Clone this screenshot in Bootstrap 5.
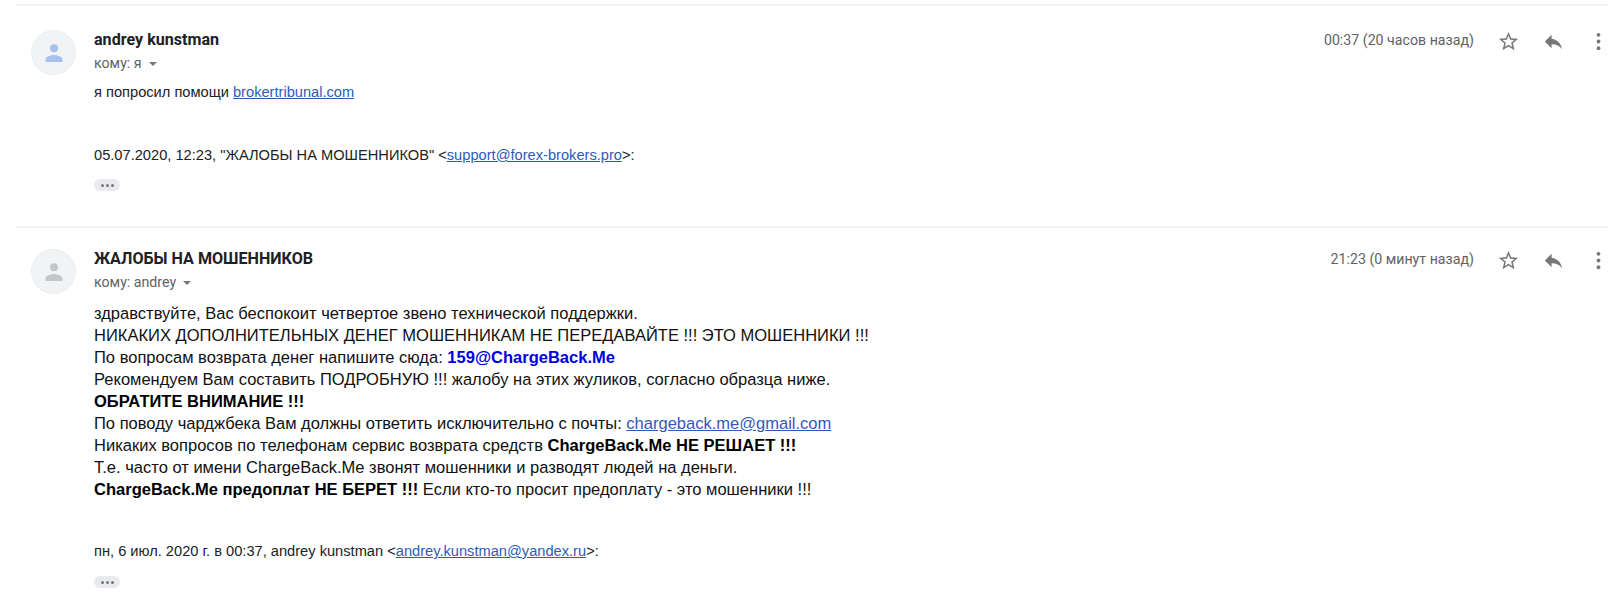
<!DOCTYPE html>
<html lang="ru">
<head>
    <meta charset="UTF-8">
    <meta name="viewport" content="width=device-width, initial-scale=1.0">
    <title>Письмо</title>
    <link href="https://cdn.jsdelivr.net/npm/bootstrap@5.3.0/dist/css/bootstrap.min.css" rel="stylesheet">
    <style>
        body {
            font-family: "Liberation Sans", Arial, sans-serif;
            background-color: #fff;
            color: #222;
            padding: 4px 15px 0;
            overflow: hidden;
        }
        a { color: #2f5bb7; }
        .mail-item {
            border-top: 2px solid #f4f4f4;
            padding: 21px 0 0 16px;
            gap: 18px;
        }
        .mail-first { height: 222px; padding-top: 24px; }
        .mail-avatar {
            width: 45px;
            height: 45px;
            border-radius: 50%;
            background-color: #f1f3f4;
            border: 1px solid #eceeef;
            flex-shrink: 0;
        }
        .mail-from {
            font-family: Roboto, sans-serif;
            font-weight: 700;
            font-size: 16.1px;
            line-height: 20px;
            color: #202124;
        }
        .mail-to {
            font-family: Roboto, sans-serif;
            font-size: 14.2px;
            line-height: 20px;
            color: #5f6368;
            margin-top: 3px;
        }
        .mail-caret {
            display: inline-block;
            border-left: 4.5px solid transparent;
            border-right: 4.5px solid transparent;
            border-top: 4.5px solid #777;
            margin-left: 7px;
            vertical-align: 2px;
        }
        .mail-time {
            font-family: Roboto, sans-serif;
            font-size: 14.2px;
            color: #5f6368;
            margin-right: 23px;
        }
        .mail-icons { gap: 22px; margin-right: -2px; }
        .mail-right { height: 22px; }
        .mail-text-sm {
            font-size: 14.65px;
            line-height: 18px;
            color: #222;
        }
        .mail-text-lg {
            font-size: 16.52px;
            line-height: 22px;
            color: #111;
            margin-top: 11px;
        }
        .mail-text-lg b { color: #000; }
        .mail-blue { color: #0000e0 !important; }
        .mail-dots {
            width: 26px;
            height: 12px;
            border-radius: 6px;
            background-color: #e8eaed;
            gap: 2px;
            margin-top: 15px;
        }
        .mail-dots i {
            width: 3px;
            height: 3px;
            border-radius: 50%;
            background-color: #777;
        }
        .mail-lead { margin-top: 10px; }
        .mail-quote1 { margin-top: 45px; }
        .mail-quote2 { margin-top: 41px; }
        .mail-quote2 + .mail-dots { margin-top: 16px; }
    </style>
</head>
<body>

<!-- first message -->
<div class="mail-item mail-first d-flex">
    <div class="mail-avatar d-flex align-items-center justify-content-center">
        <svg width="24" height="24" viewBox="0 0 24 24" fill="#a8c2f0"><circle cx="12" cy="7.200" r="4"/><path d="M3.500 21v-2.500c0-3 5.500-4.500 8.500-4.500s8.500 1.500 8.500 4.500V21z"/></svg>
    </div>
    <div class="flex-grow-1">
        <div class="d-flex justify-content-between">
            <div>
                <div class="mail-from">andrey kunstman</div>
                <div class="mail-to">кому: я<span class="mail-caret"></span></div>
            </div>
            <div class="mail-right d-flex align-items-center">
                <span class="mail-time">00:37 (20 часов назад)</span>
                <div class="mail-icons d-flex">
                    <svg width="23" height="23" viewBox="0 0 24 24" fill="#777"><path d="M22 9.200l-7.200-.6L12 2 9.200 8.600 2 9.200l5.500 4.700L5.800 21 12 17.300 18.200 21l-1.600-7.100zM12 15.400l-3.800 2.300 1-4.300-3.300-2.900 4.400-.4L12 6.100l1.700 4 4.400.4-3.300 2.900 1 4.300z"/></svg>
                    <svg width="23" height="23" viewBox="0 0 24 24" fill="#777"><path d="M10 9V5l-7 7 7 7v-4.100c5 0 8.500 1.600 11 5.100-1-5-4-10-11-11z"/></svg>
                    <svg width="23" height="23" viewBox="0 0 24 24" fill="#777"><circle cx="12" cy="5" r="2"/><circle cx="12" cy="12" r="2"/><circle cx="12" cy="19" r="2"/></svg>
                </div>
            </div>
        </div>
        <div class="mail-text-sm mail-lead">я попросил помощи <a href="#">brokertribunal.com</a></div>
        <div class="mail-text-sm mail-quote1">05.07.2020, 12:23, "ЖАЛОБЫ НА МОШЕННИКОВ" &lt;<a href="#">support@forex-brokers.pro</a>&gt;:</div>
        <div class="mail-dots d-flex align-items-center justify-content-center"><i></i><i></i><i></i></div>
    </div>
</div>

<!-- second message -->
<div class="mail-item d-flex">
    <div class="mail-avatar d-flex align-items-center justify-content-center">
        <svg width="24" height="24" viewBox="0 0 24 24" fill="#c4c7c9"><circle cx="12" cy="7.200" r="4"/><path d="M3.500 21v-2.500c0-3 5.500-4.500 8.500-4.500s8.500 1.500 8.500 4.500V21z"/></svg>
    </div>
    <div class="flex-grow-1">
        <div class="d-flex justify-content-between">
            <div>
                <div class="mail-from">ЖАЛОБЫ НА МОШЕННИКОВ</div>
                <div class="mail-to">кому: andrey<span class="mail-caret"></span></div>
            </div>
            <div class="mail-right d-flex align-items-center">
                <span class="mail-time">21:23 (0 минут назад)</span>
                <div class="mail-icons d-flex">
                    <svg width="23" height="23" viewBox="0 0 24 24" fill="#777"><path d="M22 9.200l-7.200-.6L12 2 9.200 8.600 2 9.200l5.500 4.700L5.800 21 12 17.300 18.200 21l-1.600-7.100zM12 15.400l-3.800 2.300 1-4.300-3.300-2.900 4.400-.4L12 6.100l1.700 4 4.400.4-3.300 2.900 1 4.300z"/></svg>
                    <svg width="23" height="23" viewBox="0 0 24 24" fill="#777"><path d="M10 9V5l-7 7 7 7v-4.100c5 0 8.500 1.600 11 5.100-1-5-4-10-11-11z"/></svg>
                    <svg width="23" height="23" viewBox="0 0 24 24" fill="#777"><circle cx="12" cy="5" r="2"/><circle cx="12" cy="12" r="2"/><circle cx="12" cy="19" r="2"/></svg>
                </div>
            </div>
        </div>
        <div class="mail-text-lg">
            здравствуйте, Вас беспокоит четвертое звено технической поддержки.<br>
            НИКАКИХ ДОПОЛНИТЕЛЬНЫХ ДЕНЕГ МОШЕННИКАМ НЕ ПЕРЕДАВАЙТЕ !!! ЭТО МОШЕННИКИ !!!<br>
            По вопросам возврата денег напишите сюда: <b class="mail-blue">159@ChargeBack.Me</b><br>
            Рекомендуем Вам составить ПОДРОБНУЮ !!! жалобу на этих жуликов, согласно образца ниже.<br>
            <b>ОБРАТИТЕ ВНИМАНИЕ !!!</b><br>
            По поводу чарджбека Вам должны ответить исключительно с почты: <a href="#">chargeback.me@gmail.com</a><br>
            Никаких вопросов по телефонам сервис возврата средств <b>ChargeBack.Me НЕ РЕШАЕТ !!!</b><br>
            Т.е. часто от имени ChargeBack.Me звонят мошенники и разводят людей на деньги.<br>
            <b>ChargeBack.Me предоплат НЕ БЕРЕТ !!!</b> Если кто-то просит предоплату - это мошенники !!!
        </div>
        <div class="mail-text-sm mail-quote2">пн, 6 июл. 2020 г. в 00:37, andrey kunstman &lt;<a href="#">andrey.kunstman@yandex.ru</a>&gt;:</div>
        <div class="mail-dots d-flex align-items-center justify-content-center"><i></i><i></i><i></i></div>
    </div>
</div>

<script src="https://cdn.jsdelivr.net/npm/bootstrap@5.3.0/dist/js/bootstrap.bundle.min.js"></script>
</body>
</html>
